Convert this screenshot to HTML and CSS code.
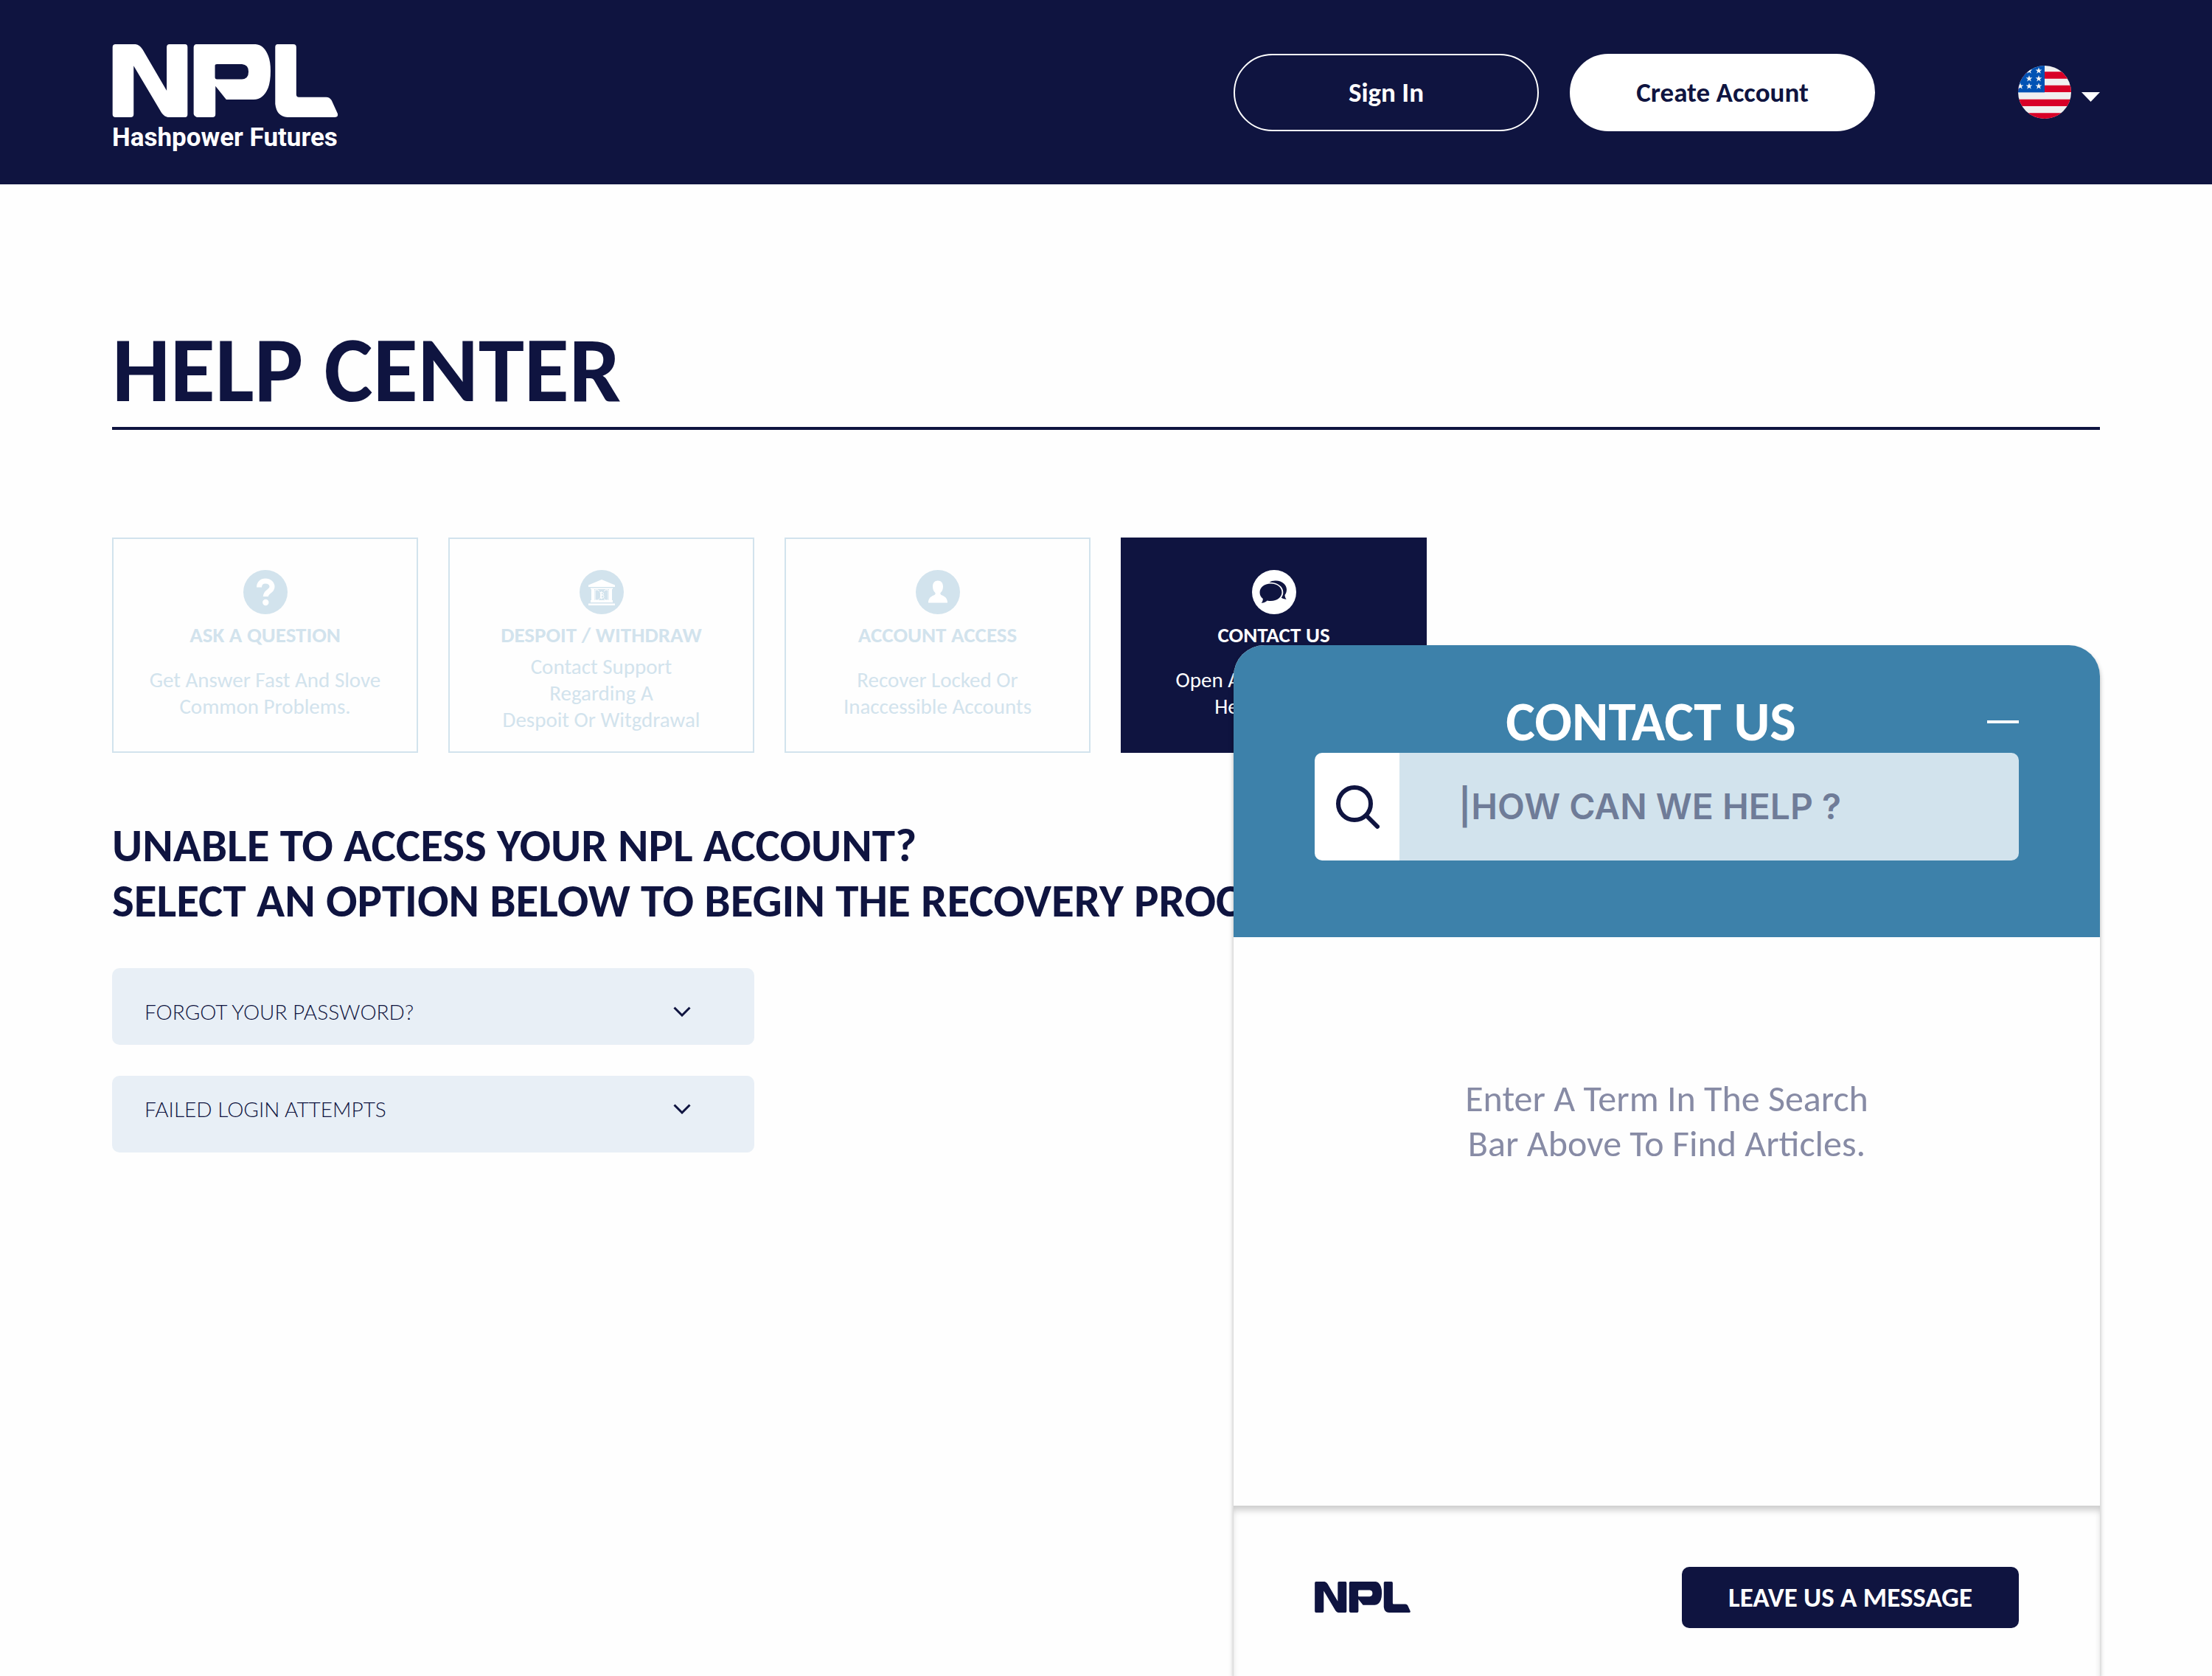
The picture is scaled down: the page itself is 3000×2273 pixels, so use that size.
FILE: index.html
```html
<!DOCTYPE html>
<html lang="en">
<head>
<meta charset="utf-8">
<meta name="viewport" content="width=device-width, initial-scale=1">
<title>Help Center - NPL Hashpower Futures</title>
<link rel="stylesheet" href="styles.css">
</head>
<body>
<svg class="defs" aria-hidden="true">
  <symbol id="npl-mark" viewBox="0 0 920 298">
    <path d="M12 0H94Q111 2 123 22L221 190V12Q221 0 232 0H296Q306 0 306 12V286Q306 298 296 298H226Q212 296 200 280L86 88V286Q86 298 74 298H12Q0 298 0 286V12Q0 0 12 0Z"/>
    <path fill-rule="evenodd" d="M342 0H584Q618 2 636 48Q645 72 645 108Q645 152 635 178Q616 224 576 226H464L420 171V286Q420 298 408 298H344Q332 294 331 284V12Q332 1 342 0ZM426 81Q418 81 418 88V134Q418 143 426 143H528Q555 141 555 112Q555 83 528 81Z"/>
    <path d="M674 0H738Q750 0 750 12V205Q750 216 760 216H872Q886 216 894 229L919 284Q922 298 908 298H714Q670 296 664 244V12Q664 0 674 0Z"/>
  </symbol>
  <symbol id="star" viewBox="-10 -10 20 20">
    <path d="M0-10L2.4-3.2 9.5-3.1 3.8 1.2 5.9 8.1 0 4-5.9 8.1-3.8 1.2-9.5-3.1-2.4-3.2Z"/>
  </symbol>
</svg>

<header class="topbar">
  <a class="brand" href="#" aria-label="NPL Hashpower Futures">
    <svg class="brand-mark" aria-hidden="true"><use href="#npl-mark"/></svg>
    <span class="brand-tag">Hashpower Futures</span>
  </a>
  <nav class="account" aria-label="Account">
    <button class="pill" type="button">Sign In</button>
    <button class="pill pill-solid" type="button">Create Account</button>
    <button class="language" type="button" aria-label="Language: English (US)">
      <svg class="flag" viewBox="0 0 216 216" aria-hidden="true">
        <clipPath id="disc"><circle cx="108" cy="108" r="108"/></clipPath>
        <g clip-path="url(#disc)">
          <rect width="216" height="216" fill="#f0f0f0"/>
          <path fill="#d80027" d="M0 25H216V53H0ZM0 80H216V108H0ZM0 137H216V165H0ZM0 193H216V216H0Z"/>
          <rect width="108" height="109" fill="#0052b4"/>
          <g fill="#f0f0f0">
            <use href="#star" x="31" y="7" width="28" height="28"/>
            <use href="#star" x="70" y="7" width="28" height="28"/>
            <use href="#star" x="31" y="39" width="28" height="28"/>
            <use href="#star" x="70" y="39" width="28" height="28"/>
            <use href="#star" x="-5" y="70" width="28" height="28"/>
            <use href="#star" x="31" y="70" width="28" height="28"/>
            <use href="#star" x="70" y="70" width="28" height="28"/>
          </g>
        </g>
      </svg>
      <svg class="caret" viewBox="0 0 25 13" aria-hidden="true"><path d="M0 0H25L12.500 13Z"/></svg>
    </button>
  </nav>
</header>

<main class="page">
  <h1 class="page-title">HELP CENTER</h1>

  <div class="topics">
    <a class="topic" href="#">
      <svg class="topic-icon" viewBox="0 0 60 60" aria-hidden="true">
        <circle cx="30" cy="30" r="30"/>
        <path class="line" d="M21.500 23.500C21.500 18 25 15 30 15S39 18 39 23C39 29 30.300 29 30.300 36"/>
        <circle class="cut" cx="30.300" cy="44" r="4.200"/>
      </svg>
      <h2 class="topic-name">ASK A QUESTION</h2>
      <p class="topic-text">Get Answer Fast And Slove<br>Common Problems.</p>
    </a>
    <a class="topic" href="#">
      <svg class="topic-icon" viewBox="0 0 60 60" aria-hidden="true">
        <circle cx="30" cy="30" r="30"/>
        <path class="cut" d="M30 13L48 20.500V23H12V20.500ZM15 24.500H45V26H15ZM16 26H20V41H16ZM40 26H44V41H40ZM15 41H45V44H15ZM12 45.500H48V48H12Z"/>
        <path class="thin" d="M21 27H25M35 27H39M21 41H26M34 41H39M21 27V41M39 27V41M25 27L27 29M35 27L33 29M25 41L27 39M35 41L33 39"/>
        <path class="thin" d="M27.500 30.500H30.500Q32.500 30.500 32.500 32.200T30.500 34H28.500H31Q33 34 33 36T31 38H27.500M28.700 30.500V38M29.700 29V39.500"/>
      </svg>
      <h2 class="topic-name">DESPOIT / WITHDRAW</h2>
      <p class="topic-text">Contact Support<br>Regarding A<br>Despoit Or Witgdrawal</p>
    </a>
    <a class="topic" href="#">
      <svg class="topic-icon" viewBox="0 0 60 60" aria-hidden="true">
        <circle cx="30" cy="30" r="30"/>
        <path class="cut" d="M30 14.500C34.500 14.500 37 17.500 37 22.500C37 26.500 35.500 29.500 33.500 31C33 33 34 33.600 36 34.500C40.500 36.500 43 39 43 44.500H17C17 39 19.500 36.500 24 34.500C26 33.600 27 33 26.500 31C24.500 29.500 23 26.500 23 22.500C23 17.500 25.500 14.500 30 14.500Z"/>
      </svg>
      <h2 class="topic-name">ACCOUNT ACCESS</h2>
      <p class="topic-text">Recover Locked Or<br>Inaccessible Accounts</p>
    </a>
    <a class="topic topic-active" href="#" aria-current="page">
      <svg class="topic-icon" viewBox="0 0 60 60" aria-hidden="true">
        <circle cx="30" cy="30" r="30"/>
        <path class="cut" d="M25.500 18.500C16.500 18.500 10.500 23.800 10.500 30.300C10.500 34.200 12 37 14.800 39C14.800 41.500 14.200 43 12.700 44.800C16.500 44.600 18.800 43.600 20.700 41.500C22.200 41.900 23.800 42.100 25.500 42.100C34.500 42.100 40.500 36.800 40.500 30.300S34.500 18.500 25.500 18.500Z"/>
        <path class="cut" d="M23.500 16.700C26 15 29 14.300 32.500 14.500C41 14.800 47 20 47 26.500C47 29.500 46 32 44.500 34C44.700 36.500 45.300 38 46.700 39.700C43.800 39.600 41.500 38.800 39.800 37.500C41.600 35.300 42.300 33 42.300 30C42.300 22.500 34.500 16.500 23.500 16.700Z"/>
      </svg>
      <h2 class="topic-name">CONTACT US</h2>
      <p class="topic-text">Open A Ticket And Get<br>Help By Email</p>
    </a>
  </div>

  <h2 class="prompt">UNABLE TO ACCESS YOUR NPL ACCOUNT?<br>SELECT AN OPTION BELOW TO BEGIN THE RECOVERY PROCESS</h2>

  <div class="options">
    <button class="option" type="button" aria-expanded="false">
      <span>FORGOT YOUR PASSWORD?</span>
      <svg class="chevron" viewBox="0 0 24 14" aria-hidden="true"><path d="M1.500 1.500L12 12L22.500 1.500"/></svg>
    </button>
    <button class="option option-raised" type="button" aria-expanded="false">
      <span>FAILED LOGIN ATTEMPTS</span>
      <svg class="chevron" viewBox="0 0 24 14" aria-hidden="true"><path d="M1.500 1.500L12 12L22.500 1.500"/></svg>
    </button>
  </div>
</main>

<aside class="widget" aria-label="Contact us">
  <div class="widget-head">
    <div class="widget-bar">
      <h2 class="widget-title">CONTACT US</h2>
      <button class="minimize" type="button" aria-label="Minimize"></button>
    </div>
    <form class="search" role="search">
      <label class="search-label" for="search-field" aria-label="Search">
        <svg class="search-icon" viewBox="0 0 60 60" aria-hidden="true"><circle cx="26" cy="26" r="22"/><path d="M42 42L57 57"/></svg>
      </label>
      <input class="search-field" id="search-field" type="text" placeholder="|HOW CAN WE HELP ?">
    </form>
  </div>
  <div class="widget-body">
    <p class="hint">Enter A Term In The Search<br>Bar Above To Find Articles.</p>
  </div>
  <div class="widget-foot">
    <svg class="foot-mark" role="img" aria-label="NPL"><use href="#npl-mark"/></svg>
    <button class="message" type="button">LEAVE US A MESSAGE</button>
  </div>
</aside>
</body>
</html>
```

FILE: styles.css
```css
:root {
  --navy: #0f1440;
  --blue: #3d81aa;
  --pale: #d2e3ed;
  --gutter: 152px;
}

* { box-sizing: border-box; }

body {
  margin: 0;
  min-height: 100vh;
  overflow-x: hidden;
  background: #fefefe;
  color: var(--navy);
  font-family: Carlito, Calibri, Lato, sans-serif;
}

h1, h2, p { margin: 0; }
button, input { font: inherit; color: inherit; border: 0; padding: 0; }
button { cursor: pointer; }
a { color: inherit; text-decoration: none; }
svg { display: block; flex: none; }
.defs { position: absolute; width: 0; height: 0; }

/* Top bar */
.topbar {
  display: flex;
  align-items: center;
  justify-content: space-between;
  height: 250px;
  padding: 0 var(--gutter);
  background: var(--navy);
  color: #fff;
}
.brand { display: grid; gap: 6px; padding-top: 18px; }
.brand-mark { width: 307px; height: 99px; fill: #fff; }
.brand-tag {
  font: 700 35px/44px Roboto, "Liberation Sans", sans-serif;
}
.account { display: flex; align-items: center; gap: 42px; }
.pill {
  width: 414px;
  height: 105px;
  border: 2px solid #fff;
  border-radius: 53px;
  background: none;
  font-size: 37px;
  font-weight: 700;
}
.pill-solid { background: #fff; color: var(--navy); }
.language {
  display: flex;
  align-items: center;
  gap: 14px;
  margin-left: 152px;
  background: none;
}
.flag { width: 72px; height: 72px; }
.caret { width: 25px; height: 13px; margin-top: 12px; fill: #fff; }

/* Page */
.page { padding: 190px var(--gutter) 0; }
.page-title {
  padding-bottom: 15px;
  border-bottom: 4px solid var(--navy);
  font-size: 125px;
  line-height: 124px;
}

.topics {
  display: grid;
  grid-template-columns: repeat(4, 415px);
  gap: 41px;
  margin-top: 146px;
}
.topic {
  display: flex;
  flex-direction: column;
  align-items: center;
  height: 292px;
  padding: 42px 24px 24px;
  border: 2px solid var(--pale);
  color: var(--pale);
  text-align: center;
}
.topic-icon {
  width: 60px;
  height: 60px;
  fill: currentColor;
}
.topic-icon .cut { fill: #fff; }
.topic-icon .line { fill: none; stroke: #fff; stroke-width: 7; }
.topic-icon .thin { fill: none; stroke: #fff; stroke-width: 1; }
.topic-name { margin-top: 10px; font-size: 29px; line-height: 36px; }
.topic-text {
  display: flex;
  flex: 1;
  flex-direction: column;
  justify-content: center;
  margin-top: 6px;
  font-size: 29px;
  line-height: 36px;
  white-space: nowrap;
}
.topic-active { border-color: var(--navy); background: var(--navy); color: #fff; }
.topic-active .cut { fill: var(--navy); }

.prompt {
  margin-top: 88px;
  font-size: 63px;
  line-height: 75px;
  white-space: nowrap;
}

.options {
  display: grid;
  gap: 42px;
  width: 871px;
  margin-top: 54px;
}
.option {
  display: flex;
  align-items: center;
  justify-content: space-between;
  height: 104px;
  padding: 14px 86px 0 44px;
  border-radius: 10px;
  background: #e8eff6;
  font: 300 28px/36px Lato, Carlito, sans-serif;
}
.option-raised { padding-top: 0; padding-bottom: 14px; }
.chevron { width: 24px; height: 14px; fill: none; stroke: var(--navy); stroke-width: 3; }

/* Contact widget, floating over the page */
.widget {
  position: fixed;
  top: 875px;
  right: var(--gutter);
  bottom: 0;
  display: flex;
  flex-direction: column;
  width: 1175px;
  border-radius: 42px 42px 0 0;
  background: #fefefe;
  box-shadow: 0 4px 6px rgba(0, 0, 0, 0.3);
}
.widget-head {
  height: 396px;
  padding: 62px 110px 0;
  border-radius: 42px 42px 0 0;
  background: var(--blue);
}
.widget-bar { display: flex; align-items: center; height: 84px; }
.widget-title {
  flex: 1;
  color: #fff;
  font-size: 75px;
  line-height: 84px;
  text-align: center;
}
.minimize { width: 43px; height: 4px; background: #fff; }
.search {
  display: flex;
  height: 146px;
  overflow: hidden;
  border-radius: 10px;
}
.search-label {
  display: grid;
  place-items: center;
  width: 115px;
  background: #fff;
}
.search-icon {
  width: 60px;
  height: 60px;
  fill: none;
  stroke: var(--navy);
  stroke-width: 6;
  stroke-linecap: round;
}
.search-field {
  flex: 1;
  min-width: 0;
  padding: 0 80px;
  border-radius: 0;
  background: var(--pale);
  font: 600 48px/60px Inter, Roboto, sans-serif;
}
.search-field::placeholder { color: #6f7c98; opacity: 1; }

.widget-body {
  flex: 1;
  padding-top: 188px;
  color: #878ba5;
  font-size: 50px;
  line-height: 61px;
  text-align: center;
}
.widget-foot {
  display: flex;
  align-items: flex-start;
  justify-content: space-between;
  height: 231px;
  padding: 83px 110px 0;
  box-shadow: inset 0 8px 10px -2px rgba(0, 0, 0, 0.2);
}
.foot-mark { width: 130px; height: 42px; margin-top: 20px; fill: var(--navy); }
.message {
  width: 457px;
  height: 83px;
  border-radius: 10px;
  background: var(--navy);
  color: #fff;
  font-size: 37px;
  font-weight: 700;
}
```
